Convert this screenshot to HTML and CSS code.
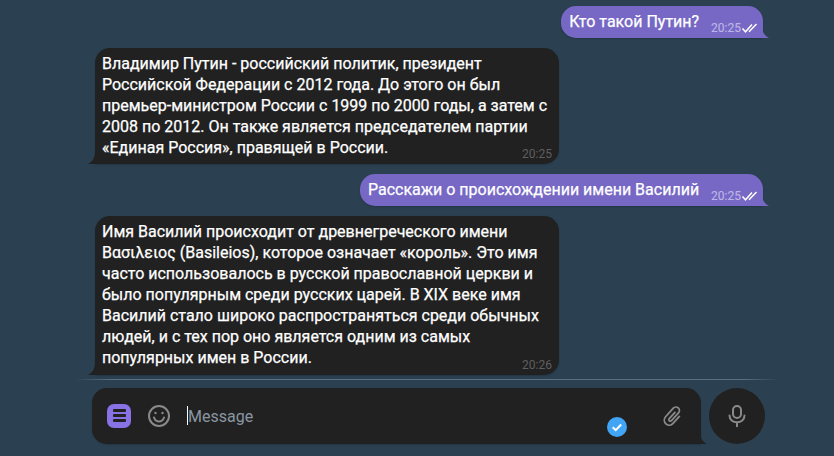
FILE: index.html
```html
<!DOCTYPE html>
<html lang="ru">
<head>
<meta charset="utf-8">
<title>Chat</title>
<link rel="stylesheet" href="styles.css">
</head>
<body>
<main class="chat">
  <section class="messages">
    <div class="msg out first">
      <span class="text">Кто такой Путин?</span>
      <span class="meta"><span class="time">20:25</span><svg class="checks" width="18" height="12" viewBox="0 0 18 12"><path d="M1.500 6.500l3 3.300L11 2.400M8 9.800L15.500 2" fill="none" stroke="#fff" stroke-width="1.500"/></svg></span>
      <svg class="tail tail-out" width="8" height="12" viewBox="0 0 8 12"><path d="M0 0C0 5 2 9.500 7 12H0Z"/></svg>
    </div>
    <div class="msg in">
      <p class="para">Владимир Путин - российский политик, президент<br>Российской Федерации с 2012 года. До этого он был<br>премьер-министром России с 1999 по 2000 годы, а затем с<br>2008 по 2012. Он также является председателем партии<br>«Единая Россия», правящей в России.</p>
      <span class="stamp">20:25</span>
      <svg class="tail tail-in" width="8" height="12" viewBox="0 0 8 12"><path d="M8 0C8 5 6 9.500 1 12H8Z"/></svg>
    </div>
    <div class="msg out second">
      <span class="text">Расскажи о происхождении имени Василий</span>
      <span class="meta"><span class="time">20:25</span><svg class="checks" width="18" height="12" viewBox="0 0 18 12"><path d="M1.500 6.500l3 3.300L11 2.400M8 9.800L15.500 2" fill="none" stroke="#fff" stroke-width="1.500"/></svg></span>
      <svg class="tail tail-out" width="8" height="12" viewBox="0 0 8 12"><path d="M0 0C0 5 2 9.500 7 12H0Z"/></svg>
    </div>
    <div class="msg in">
      <p class="para">Имя Василий происходит от древнегреческого имени<br>Βασιλειος (Basileios), которое означает «король». Это имя<br>часто использовалось в русской православной церкви и<br>было популярным среди русских царей. В XIX веке имя<br>Василий стало широко распространяться среди обычных<br>людей, и с тех пор оно является одним из самых<br>популярных имен в России.</p>
      <span class="stamp">20:26</span>
      <svg class="tail tail-in" width="8" height="12" viewBox="0 0 8 12"><path d="M8 0C8 5 6 9.500 1 12H8Z"/></svg>
    </div>
  </section>
  <hr class="divider">
  <footer class="composer">
    <div class="field">
      <span class="menu-btn"><i></i><i></i><i></i></span>
      <svg class="smile" width="24" height="24" viewBox="0 0 24 24" fill="none" stroke="#8a8a8a" stroke-width="2"><circle cx="12" cy="12" r="10"/><path d="M7 13.500c1 3 3 4 5 4s4-1 5-4" stroke-linecap="round"/><circle cx="8.500" cy="9" r="1.200" fill="#8a8a8a" stroke="none"/><circle cx="15.500" cy="9" r="1.200" fill="#8a8a8a" stroke="none"/></svg>
      <span class="caret"></span>
      <span class="placeholder">Message</span>
      <svg class="clip" width="24" height="24" viewBox="0 0 24 24" fill="none" stroke="#8a8a8a" stroke-width="1.800" stroke-linecap="round"><path d="M17 8v9.500a5 5 0 0 1-10 0V6a3.500 3.500 0 0 1 7 0v10.500a1.500 1.500 0 0 1-3 0V8" transform="rotate(42 12 12)"/></svg>
      <svg class="tail tail-out tail-field" width="8" height="12" viewBox="0 0 8 12"><path d="M0 0C0 5 2 9.500 7 12H0Z"/></svg>
      <svg class="badge" width="20" height="20" viewBox="0 0 20 20"><circle cx="10" cy="10" r="10" fill="#42a4f5"/><path d="M5.700 10.300l3 2.800 5.500-5.600" fill="none" stroke="#fff" stroke-width="2"/></svg>
    </div>
    <button class="mic" type="button" aria-label="Record">
      <svg width="24" height="24" viewBox="0 0 24 24" fill="none" stroke="#8a8a8a" stroke-width="2" stroke-linecap="round"><rect x="8" y="2" width="8" height="12" rx="4"/><path d="M4.500 11.500c0 4 3.500 6.800 7.500 6.800s7.500-2.800 7.500-6.800M12 18.300v4"/></svg>
    </button>
  </footer>
</main>
</body>
</html>
```
FILE: styles.css
```css
* { box-sizing: border-box; }
html, body { height: 100%; }
body {
  margin: 0;
  background: #2b4152;
  color: #fff;
  font-family: Roboto, "Liberation Sans", sans-serif;
  font-size: 16px;
  overflow: hidden;
}
.chat {
  height: 456px;
  display: flex;
  flex-direction: column;
  padding-top: 6px;
}
.messages {
  display: flex;
  flex-direction: column;
  gap: 10px;
  padding: 0 71px 0 95px;
}
.msg {
  position: relative;
  box-shadow: 0 1px 2px rgba(0, 0, 0, .2);
}
.msg.out {
  align-self: flex-end;
  display: flex;
  height: 32px;
  background: #7668c4;
  border-radius: 15px 15px 0 15px;
  padding: 5px 4px 0 8px;
  line-height: 21px;
}
.text, .para { -webkit-text-stroke: .25px currentColor; }
.text { white-space: nowrap; }
.meta {
  display: flex;
  align-items: center;
  height: 16px;
  margin-top: 9px;
  margin-left: 12px;
}
.time {
  font-size: 12px;
  color: #bdb5e6;
  -webkit-text-stroke: .15px currentColor;
}
.checks { flex: none; }
.msg.in {
  width: 464px;
  background: #212121;
  border-radius: 15px 15px 15px 0;
  padding: 5px 7px 6.400px;
}
.para {
  margin: 0;
  line-height: 21px;
  white-space: nowrap;
}
.stamp {
  position: absolute;
  right: 7px;
  bottom: 3px;
  font-size: 12px;
  color: #5f5f5f;
}
.tail {
  position: absolute;
  bottom: 0;
}
.tail-out { right: -7px; fill: #7668c4; }
.tail-in { left: -8px; fill: #212121; }
.tail-field { fill: #212121; }
.divider {
  width: 704px;
  height: 1px;
  margin: 4px 0 0 75px;
  border: 0;
  background: linear-gradient(90deg, rgba(100, 125, 140, 0), #5a7081 5%, #5a7081 95%, rgba(100, 125, 140, 0));
}
.composer {
  display: flex;
  gap: 8px;
  margin: 8px 0 0 92px;
}
.field {
  position: relative;
  width: 609px;
  height: 56px;
  display: flex;
  align-items: center;
  background: #212121;
  border-radius: 15px 15px 0 15px;
  box-shadow: 0 1px 2px rgba(0, 0, 0, .2);
  padding-left: 15px;
}
.menu-btn {
  width: 24px;
  height: 24px;
  background: #8872e6;
  border-radius: 7px;
  display: flex;
  flex-direction: column;
  justify-content: center;
  align-items: center;
  gap: 2px;
}
.menu-btn i {
  display: block;
  width: 13px;
  height: 3px;
  background: #222;
  border-radius: 1px;
}
.smile { margin-left: 16px; }
.caret {
  width: 1px;
  height: 19px;
  margin-left: 16px;
  background: #fff;
}
.placeholder {
  color: #8a97a3;
  font-size: 16px;
  margin-top: 2px;
}
.clip { margin-left: auto; margin-right: 16px; }
.badge {
  position: absolute;
  left: 515px;
  top: 29px;
}
.mic {
  width: 56px;
  height: 56px;
  border: 0;
  padding: 0;
  border-radius: 50%;
  background: #212121;
  display: flex;
  align-items: center;
  justify-content: center;
}
```
